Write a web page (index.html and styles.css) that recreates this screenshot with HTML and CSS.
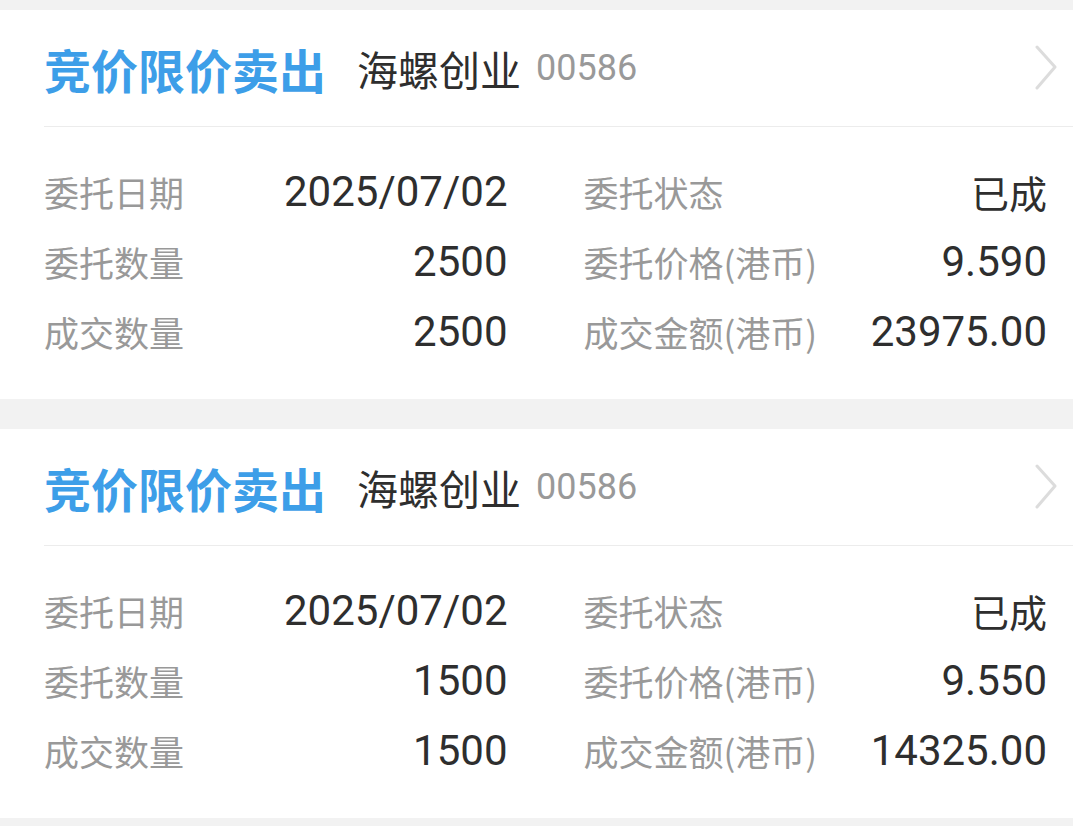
FILE: index.html
```html
<!DOCTYPE html>
<html lang="zh-CN">
<head>
  <meta charset="UTF-8">
  <meta name="viewport" content="width=device-width, initial-scale=1.0">
  <title>委托记录</title>
  <link rel="stylesheet" href="styles.css">
</head>
<body>
  <div class="list">
    <div class="order">
      <div class="order-head">
        <span class="type">竞价限价卖出</span>
        <span class="name">海螺创业</span>
        <span class="code">00586</span>
        <svg class="arrow" width="24" height="46" viewBox="0 0 24 46">
          <polyline points="3,2 21,22 3,43" fill="none" stroke="#dcdcdc" stroke-width="3" stroke-linecap="round" stroke-linejoin="round"/>
        </svg>
      </div>
      <div class="order-body">
        <div class="cell"><span class="label">委托日期</span><span class="value">2025/07/02</span></div>
        <div class="cell"><span class="label">委托状态</span><span class="value status">已成</span></div>
        <div class="cell"><span class="label">委托数量</span><span class="value">2500</span></div>
        <div class="cell"><span class="label">委托价格(港币)</span><span class="value">9.590</span></div>
        <div class="cell"><span class="label">成交数量</span><span class="value">2500</span></div>
        <div class="cell"><span class="label">成交金额(港币)</span><span class="value">23975.00</span></div>
      </div>
    </div>

    <div class="order">
      <div class="order-head">
        <span class="type">竞价限价卖出</span>
        <span class="name">海螺创业</span>
        <span class="code">00586</span>
        <svg class="arrow" width="24" height="46" viewBox="0 0 24 46">
          <polyline points="3,2 21,22 3,43" fill="none" stroke="#dcdcdc" stroke-width="3" stroke-linecap="round" stroke-linejoin="round"/>
        </svg>
      </div>
      <div class="order-body">
        <div class="cell"><span class="label">委托日期</span><span class="value">2025/07/02</span></div>
        <div class="cell"><span class="label">委托状态</span><span class="value status">已成</span></div>
        <div class="cell"><span class="label">委托数量</span><span class="value">1500</span></div>
        <div class="cell"><span class="label">委托价格(港币)</span><span class="value">9.550</span></div>
        <div class="cell"><span class="label">成交数量</span><span class="value">1500</span></div>
        <div class="cell"><span class="label">成交金额(港币)</span><span class="value">14325.00</span></div>
      </div>
    </div>
  </div>
</body>
</html>
```

FILE: styles.css
```css
:root {
  --bg: #f2f2f2;
  --card: #ffffff;
  --blue: #3d9ee8;
  --text: #2e2e2e;
  --muted: #999999;
  --line: #ececec;
}

* {
  margin: 0;
  padding: 0;
  box-sizing: border-box;
}

body {
  background-color: var(--bg);
  font-family: Roboto, "Noto Sans CJK SC", sans-serif;
  color: var(--text);
}

.list {
  padding-top: 10px;
  display: flex;
  flex-direction: column;
  gap: 30px;
}

.order {
  background-color: var(--card);
  padding-left: 44px;
  height: 389px;
}

.order-head {
  height: 117px;
  display: flex;
  align-items: center;
  border-bottom: 1px solid var(--line);
  padding-right: 15px;
}

.type {
  color: var(--blue);
  font-family: "Noto Sans CJK SC", sans-serif;
  font-weight: 700;
  font-size: 47px;
  margin-right: 31px;
}

.name {
  font-family: "Noto Sans CJK SC", sans-serif;
  font-size: 41px;
  margin-right: 15px;
}

.code {
  color: var(--muted);
  font-size: 36px;
}

.arrow {
  margin-left: auto;
}

.order-body {
  display: grid;
  grid-template-columns: 1fr 1fr;
  column-gap: 76px;
  padding: 29px 26px 0 0;
}

.cell {
  height: 70px;
  display: flex;
  align-items: center;
  justify-content: space-between;
}

.label {
  color: var(--muted);
  font-family: "Noto Sans CJK SC", sans-serif;
  font-size: 35px;
}

.value {
  font-size: 42px;
}

.status {
  font-family: "Noto Sans CJK SC", sans-serif;
  font-size: 38px;
}
```
